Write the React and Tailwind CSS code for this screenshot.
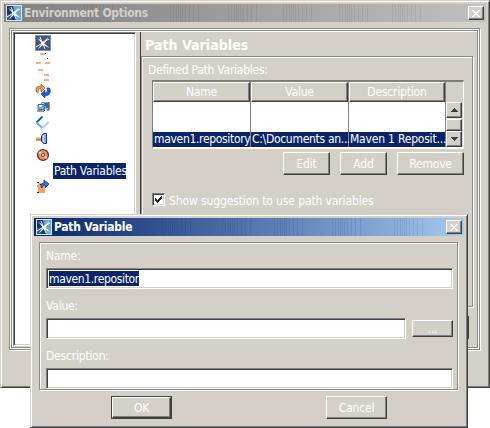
import React from "react";

const raised =
  "border-t border-l border-t-white border-l-white border-r border-b border-r-[#404040] border-b-[#404040] shadow-[inset_-1px_-1px_0_#808080]";
const sunken =
  "border border-t-[#808080] border-l-[#808080] border-r-white border-b-white shadow-[inset_1px_1px_0_#404040,inset_-1px_-1px_0_#d4d0c8]";
const etched =
  "border border-[#8c8a85] shadow-[1px_1px_0_#fff,inset_1px_1px_0_#fff]";

function Logo({ plain }) {
  return (
    <svg width="16" height="16" viewBox="0 0 16 16" className="block shrink-0">
      <rect width="16" height="16" fill={plain ? "#405579" : "#123a68"} />
      {!plain && <path d="M7 1H15V15H10Z" fill="#6aa6d8" />}
      {!plain && <path d="M1 9L8 8 5 15H1Z" fill="#275a8e" />}
      <path d="M2 2.5L8 7 13.5 2 9.5 8.5 14.5 13 8 10 2.5 14.5 7 8.5Z" fill="#fff" />
      <path d="M5 2L10 14M1 12L14 4" stroke="#fff" strokeWidth="1" />
      <rect x=".5" y=".5" width="15" height="15" fill="none" stroke={plain ? "#8494ac" : "#d7e4ee"} />
    </svg>
  );
}

function CloseButton() {
  return (
    <button className={`flex h-[14px] w-[16px] shrink-0 items-center justify-center bg-[#d4d0c8] ${raised}`}>
      <svg width="8" height="7" viewBox="0 0 8 7" shapeRendering="crispEdges">
        <path
          d="M0 0h2v1h1v1h2v-1h1v-1h2v1h-1v1h-1v1h-1v1h1v1h1v1h1v1h-2v-1h-1v-1h-2v1h-1v1h-2v-1h1v-1h1v-1h1v-1h-1v-1h-1v-1h-1z"
          fill="#fff"
        />
      </svg>
    </button>
  );
}

function Stripes({ starts, color }) {
  return (
    <svg className="absolute inset-0 h-full w-full" shapeRendering="crispEdges">
      {starts.map((s) =>
        [0, 3, 6, 8, 10, 12, 15, 19, 23, 28].map((d) => (
          <rect key={`${s}-${d}`} x={s + d} y="0" width="1" height="18" fill={color} />
        ))
      )}
    </svg>
  );
}

function Glyph({ children }) {
  return (
    <svg width="16" height="16" viewBox="0 0 16 16" className="block shrink-0">
      {children}
    </svg>
  );
}

function Tree() {
  return (
    <div className={`h-[314px] w-[123px] bg-white pt-[2px] pl-[21px] ${sunken}`}>
      <div className="flex flex-col">
        <Logo plain />
        <Glyph>
          <path d="M5 2h5v2h-5zM1 11h5v2h-5zM10 11h5v2h-5z" fill="#ffaa80" />
          <path d="M10 2h1v1h-1zM12 7h1v1h-1z" fill="#111" />
        </Glyph>
        <Glyph>
          <path d="M3 2h5v2h-5zM9 7h5v2h-5zM9 12h5v2h-5z" fill="#ffaa80" />
        </Glyph>
        <Glyph>
          <path d="M1.5 9C0 4 3 2 6 4V1L10 5 6 9V6C4 5 3 6 3 10Z" fill="#f2a04b" stroke="#66503c" strokeWidth=".7" />
          <path d="M14.5 5C17 10 13 14 10 12V15L6 11 10 7V10C12 10 13 8 12 5Z" fill="#1760d8" stroke="#16368b" strokeWidth=".7" />
        </Glyph>
        <Glyph>
          <path d="M6.5 3.5H13.5V10H6.5Z" fill="#bcd8ed" stroke="#79a7cf" />
          <path d="M9 4h4v5h-2z" fill="#256ca8" />
          <path d="M3 5.5H9.5V10.5H3Z" fill="#70a8dc" stroke="#3d73ad" />
          <path d="M2 12H9L10 11M12 11h2V3" fill="none" stroke="#333" />
          <path d="M4 6h3v2h-3z" fill="#e3f2ff" />
        </Glyph>
        <Glyph>
          <path d="M7.5 1.5L1.5 7.5" stroke="#1459a4" strokeWidth="1.8" />
          <path d="M1.5 7.5L7.5 13" stroke="#6eaae0" strokeWidth="2" />
          <path d="M7.5 13L13.5 7" stroke="#a9cdeb" strokeWidth="1.8" />
        </Glyph>
        <Glyph>
          <path d="M1 6.5h6v3H1z" fill="#efa15b" />
          <path d="M1 9h6" stroke="#ad6a43" />
          <path d="M11.5 2.5V12.5H8.5L6.5 10V5L8.5 2.5Z" fill="#7fb0ec" stroke="#17329a" />
          <path d="M8.5 4v7" stroke="#d6ebff" />
        </Glyph>
        <Glyph>
          <circle cx="8" cy="8" r="5.4" fill="#f7935b" stroke="#692f20" strokeWidth="1.4" />
          <path d="M4 5l3 2M9 9l3 2" stroke="#ffd3ac" strokeWidth="2" />
          <circle cx="8" cy="8" r="1.7" fill="#fff" stroke="#773c28" />
        </Glyph>
        <div className="flex h-4">
          <div className="ml-[18px] h-4 w-[73px] bg-[#0a246a] pl-px text-[12px] leading-[17px] tracking-[-0.25px] whitespace-nowrap text-white">
            Path Variables
          </div>
        </div>
        <Glyph>
          <path d="M3 4H9V9H10V14H3V8H2V6H3Z" fill="#ff9c62" />
          <path d="M2 3h2v1h-2zM2 13h2v1h-2zM5 5h2v1h-2z" fill="#222" />
          <path d="M6 8C6 4 8 4 9 4V1L14 5 10 9V6C8 6 8 7 7 9Z" fill="#3470d4" stroke="#1e368c" strokeWidth=".8" />
        </Glyph>
      </div>
    </div>
  );
}

function Button({ className, children }) {
  return (
    <button className={`flex items-center justify-center bg-[#d4d0c8] text-[12px] leading-none tracking-[-0.2px] text-white ${raised} ${className}`}>
      {children}
    </button>
  );
}

function Column({ title, value, className }) {
  return (
    <div className={`flex flex-col border-r border-[#808080] bg-white ${className}`}>
      <div className={`flex h-5 items-center justify-center bg-[#d4d0c8] text-[12px] leading-none tracking-[-0.2px] ${raised}`}>
        {title}
      </div>
      <div className="h-[30px]" />
      <div className="h-[15px] bg-[#0a246a] pl-px leading-[15px] whitespace-nowrap">{value}</div>
    </div>
  );
}

function Table() {
  return (
    <div className="flex h-[69px] w-[312px] border border-t-2 border-b-2 border-t-[#807e78] border-l-[#807e78] border-r-white border-b-white">
      <Column title="Name" className="w-[98px]" value={<span className="tracking-[-0.32px]">maven1.repository</span>} />
      <Column title="Value" className="w-[98px]" value={<span className="tracking-[-0.3px]">C:\Documents an...</span>} />
      <Column title="Description" className="w-[97px]" value={<span className="tracking-[-0.2px]">Maven 1 Reposit...</span>} />
      <div className="mt-5 flex w-4 flex-col bg-[#e9e7e2]">
        <div className={`flex h-4 items-center justify-center bg-[#d4d0c8] ${raised}`}>
          <svg width="7" height="4" shapeRendering="crispEdges"><path d="M3 0h1v1h1v1h1v1h1v1H0V3h1V2h1V1h1z" fill="#404040" /></svg>
        </div>
        <div className={`mt-px h-3 bg-[#d4d0c8] ${raised}`} />
        <div className={`flex h-4 items-center justify-center bg-[#d4d0c8] ${raised}`}>
          <svg width="7" height="4" shapeRendering="crispEdges"><path d="M0 0h7v1H6v1H5v1H4v1H3V3H2V2H1V1H0z" fill="#404040" /></svg>
        </div>
      </div>
    </div>
  );
}

function OptionsWindow() {
  return (
    <section className="absolute top-0 left-0 h-[388px] w-[490px] border border-t-[#d4d0c8] border-l-[#d4d0c8] border-r-[#404040] border-b-[#404040] bg-[#d4d0c8] px-[3px] pt-[3px] shadow-[inset_1px_1px_0_#fff,inset_-1px_-1px_0_#808080]">
      <header className="relative flex h-[18px] items-center bg-linear-to-r from-[#808080] to-[#c0c0c0] pr-[2px] pl-[2px]">
        <Stripes starts={[80, 166, 224, 279, 335, 388]} color="rgba(0,0,0,0.06)" />
        <div className="relative flex w-full items-center">
          <Logo />
          <h1 className="ml-[2px] grow text-[12px] leading-[18px] font-bold tracking-[-0.25px] text-[#d4d0c8]">Environment Options</h1>
          <CloseButton />
        </div>
      </header>
      <div className={`mt-[6px] ml-[5px] h-[322px] w-[471px] p-px ${etched}`}>
        <div className={`flex h-[318px] w-[467px] pt-px pl-px ${etched}`}>
          <Tree />
          <div className="ml-[4px] h-[314px] w-px shrink-0 bg-[#404040]" />
          <div className="flex flex-col">
            <h2 className="h-[24px] pt-[1px] pl-[4px] text-[14px] leading-[24px] font-bold tracking-[0.05px]">Path Variables</h2>
            <div className={`h-[251px] w-[332px] pt-[6px] pl-[10px] ${etched}`}>
              <div className="-ml-[4px] h-[17px] leading-[15px] tracking-[-0.25px]">Defined Path Variables:</div>
              <Table />
              <div className="mt-[3px] flex w-[312px] justify-end gap-[10px]">
                <Button className="h-[23px] w-[47px]">Edit</Button>
                <Button className="h-[23px] w-[47px]">Add</Button>
                <Button className="h-[23px] w-[67px]">Remove</Button>
              </div>
              <label className="mt-[18px] flex h-[13px] items-center">
                <span className={`flex h-[13px] w-[13px] items-center justify-center bg-white ${sunken}`}>
                  <svg width="7" height="7" shapeRendering="crispEdges"><path d="M0 2h1v1h1v1h1v-1h1v-1h1v-1h1v-1h1v3h-1v1h-1v1h-1v1h-1v1h-1v-1h-1v-1h-1z" fill="#222" /></svg>
                </span>
                <span className="ml-1 pt-[2px] tracking-[-0.12px] whitespace-nowrap">Show suggestion to use path variables</span>
              </label>
            </div>
            <div className="mt-[9px] ml-[300px] h-[23px] w-[28px] bg-[#404040]" />
          </div>
        </div>
      </div>
    </section>
  );
}

function VariableDialog() {
  return (
    <section className="absolute top-[214px] left-[30px] h-[214px] w-[438px] border border-t-[#d4d0c8] border-l-[#d4d0c8] border-r-[#404040] border-b-[#404040] bg-[#d4d0c8] px-[3px] pt-[3px] shadow-[inset_1px_1px_0_#fff,inset_-1px_-1px_0_#808080]">
      <header className="relative flex h-[18px] items-center bg-linear-to-r from-[#0a246a] to-[#a6caf0] pr-[2px] pl-[2px]">
        <Stripes starts={[68, 128, 188, 240, 298, 360]} color="rgba(10,36,106,0.1)" />
        <div className="relative flex w-full items-center">
          <Logo />
          <h1 className="ml-[2px] grow text-[12px] leading-[18px] font-bold tracking-[-0.25px]">Path Variable</h1>
          <CloseButton />
        </div>
      </header>
      <div className={`mt-[6px] ml-[5px] h-[148px] w-[419px] pt-[6px] pl-[6px] ${etched}`}>
        <div className="h-[19px] leading-[15px] tracking-[-0.2px]">Name:</div>
        <div className={`flex h-[21px] w-[407px] items-center bg-white pl-[2px] ${sunken}`}>
          <span className="h-[15px] w-[90px] bg-[#0a246a] leading-[16px] tracking-[-0.35px] whitespace-nowrap">maven1.repository</span>
        </div>
        <div className="mt-[10px] h-[19px] leading-[15px] tracking-[-0.2px]">Value:</div>
        <div className="flex w-[407px] items-center justify-between">
          <div className={`h-[21px] w-[360px] bg-white ${sunken}`} />
          <Button className="h-[17px] w-[41px]">...</Button>
        </div>
        <div className="mt-[10px] h-[19px] leading-[15px] tracking-[-0.2px]">Description:</div>
        <div className={`h-[21px] w-[407px] bg-white ${sunken}`} />
      </div>
      <div className="mt-[6px] ml-[77px] flex gap-[154px]">
        <div className="h-[23px] w-[61px] border border-[#404040]">
          <Button className="h-full w-full">OK</Button>
        </div>
        <Button className="h-[23px] w-[61px]">Cancel</Button>
      </div>
    </section>
  );
}

export default function App() {
  return (
    <main className="relative h-[428px] w-[490px] overflow-hidden bg-white font-['DejaVu_Sans_Condensed','DejaVu_Sans',sans-serif] text-[12px] text-white">
      <OptionsWindow />
      <VariableDialog />
    </main>
  );
}
